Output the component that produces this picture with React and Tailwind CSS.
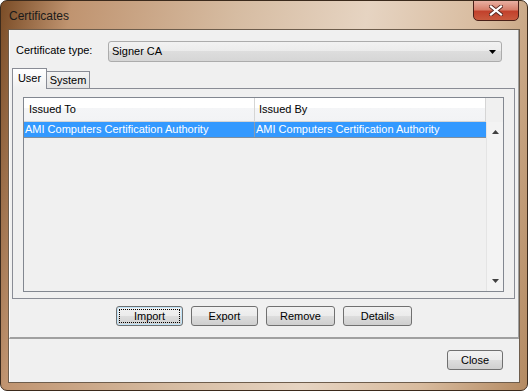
import React from 'react';

const btn =
  "relative h-[20px] rounded-[3px] border border-[#707070] bg-[linear-gradient(#f2f2f2_0%,#ebebeb_50%,#dddddd_50%,#cfcfcf_100%)] text-[11px] leading-[18px] text-black flex items-center justify-center";

function Arrow({ dir = 'down', className = '' }) {
  return (
    <svg width="7" height="4" viewBox="0 0 7 4" className={className}>
      {dir === 'down' ? (
        <polygon points="0,0 7,0 3.5,4" fill="currentColor" />
      ) : (
        <polygon points="0,4 7,4 3.5,0" fill="currentColor" />
      )}
    </svg>
  );
}

export default function App() {
  return (
    <div className="w-[528px] h-[391px] relative overflow-hidden rounded-[7px] border border-[#3b2a1c] bg-[linear-gradient(100deg,#7a4c26_0%,#c09470_12%,#d6bca2_40%,#e6d4c2_62%,#d8bb9e_82%,#b48a62_100%)] font-['Liberation_Sans',Arial,sans-serif]">
      {/* Title bar */}
      <div className="h-[28px] flex items-center pl-[8px] pt-[2px] text-[12px] text-[#1a1a1a]">
        Certificates
      </div>

      {/* Close button */}
      <div className="absolute top-[-1px] right-[8px] w-[46px] h-[21px] rounded-b-[5px] border border-[#4a2018] bg-[linear-gradient(#e9b0a2_0%,#d7806c_45%,#c2412c_55%,#c95a3e_100%)] flex items-center justify-center">
        <svg width="14" height="11" viewBox="0 0 14 11">
          <path d="M2 1.5 L12 9.5 M12 1.5 L2 9.5" stroke="#5a2a22" strokeWidth="4" strokeLinecap="square" />
          <path d="M2 1.5 L12 9.5 M12 1.5 L2 9.5" stroke="#ffffff" strokeWidth="2.2" strokeLinecap="square" />
        </svg>
      </div>

      {/* Client area */}
      <div className="ml-[7px] w-[512px] h-[354px] bg-[#f0f0f0] border border-[#6e5d4c] flex flex-col text-[11px] text-black">
        {/* Top panel */}
        <div className="h-[309px] border-l border-l-white border-r border-r-[#a0a0a0] border-b-2 border-b-[#a0a0a0] flex flex-col">
          {/* Certificate type row */}
          <div className="mt-[11px] flex items-center pl-[6px]">
            <div className="w-[92px] -mt-[3px]">Certificate type:</div>
            <div className="w-[394px] h-[21px] rounded-[3px] border border-[#acacac] bg-[linear-gradient(#f2f2f2_0%,#ebebeb_50%,#dddddd_50%,#d6d6d6_100%)] flex items-center justify-between pl-[3px] pr-[5px]">
              <span>Signer CA</span>
              <Arrow className="text-black mt-[1px]" />
            </div>
          </div>

          {/* Tabs */}
          <div className="mt-[6px] ml-[2px] flex items-end h-[20px]">
            <div className="relative z-10 w-[35px] h-[21px] -mb-px border border-b-0 border-[#898c95] bg-[linear-gradient(#ffffff,#f0f0f0)] flex items-center justify-center pb-[1px]">
              User
            </div>
            <div className="w-[43px] h-[17px] border border-b-0 border-l-0 border-[#898c95] bg-[linear-gradient(#f3f3f3,#e3e3e3)] flex items-center justify-center pt-[1px]">
              System
            </div>
          </div>

          {/* Tab page */}
          <div className="ml-[2px] w-[503px] h-[211px] border border-[#898c95] bg-[#f0f0f0] pl-[10px] pt-[8px]">
            <div className="w-[481px] h-[195px] border border-[#828790] bg-[#f0f0f0] flex flex-col">
              {/* Header */}
              <div className="flex h-[24px]">
                <div className="w-[231px] border-r border-b border-[#d5d5d5] bg-[linear-gradient(#ffffff_0%,#ffffff_45%,#f4f5f7_45%,#f2f3f5_100%)] flex items-center pl-[5px]">
                  Issued To
                </div>
                <div className="w-[231px] border-r border-b border-[#d5d5d5] bg-[linear-gradient(#ffffff_0%,#ffffff_45%,#f4f5f7_45%,#f2f3f5_100%)] flex items-center pl-[4px]">
                  Issued By
                </div>
                <div className="flex-1 bg-[#f0f0f0]" />
              </div>
              {/* Body */}
              <div className="flex flex-1">
                <div className="w-[462px]">
                  <div className="flex h-[16px] bg-[#3399ff] text-white border-b border-[#7f8fa0]">
                    <div className="w-[231px] border-r border-[#8a9bb0] pl-[1px] leading-[15px]">
                      AMI Computers Certification Authority
                    </div>
                    <div className="w-[231px] pl-[1px] leading-[15px]">
                      AMI Computers Certification Authority
                    </div>
                  </div>
                </div>
                <div className="flex-1 bg-[#f3f3f3] border-l border-[#e4e4e4] flex flex-col justify-between items-center py-[8px]">
                  <Arrow dir="up" className="text-[#404040] ml-[1px]" />
                  <Arrow dir="down" className="text-[#404040]" />
                </div>
              </div>
            </div>
          </div>

          {/* Buttons */}
          <div className="mt-[7px] ml-[106px] flex gap-[8px]">
            <div className={btn + " w-[67px] border-[#3c7fb1] shadow-[inset_0_0_0_1px_#bfe3f8]"}>
              <div className="absolute inset-[2px] border border-dotted border-black" />
              Import
            </div>
            <div className={btn + " w-[67px]"}>Export</div>
            <div className={btn + " w-[69px]"}>Remove</div>
            <div className={btn + " w-[69px]"}>Details</div>
          </div>
        </div>

        {/* Bottom panel */}
        <div className="flex-1 border-l border-l-white">
          <div className={btn + " w-[56px] mt-[11px] ml-[437px]"}>Close</div>
        </div>
      </div>
    </div>
  );
}
